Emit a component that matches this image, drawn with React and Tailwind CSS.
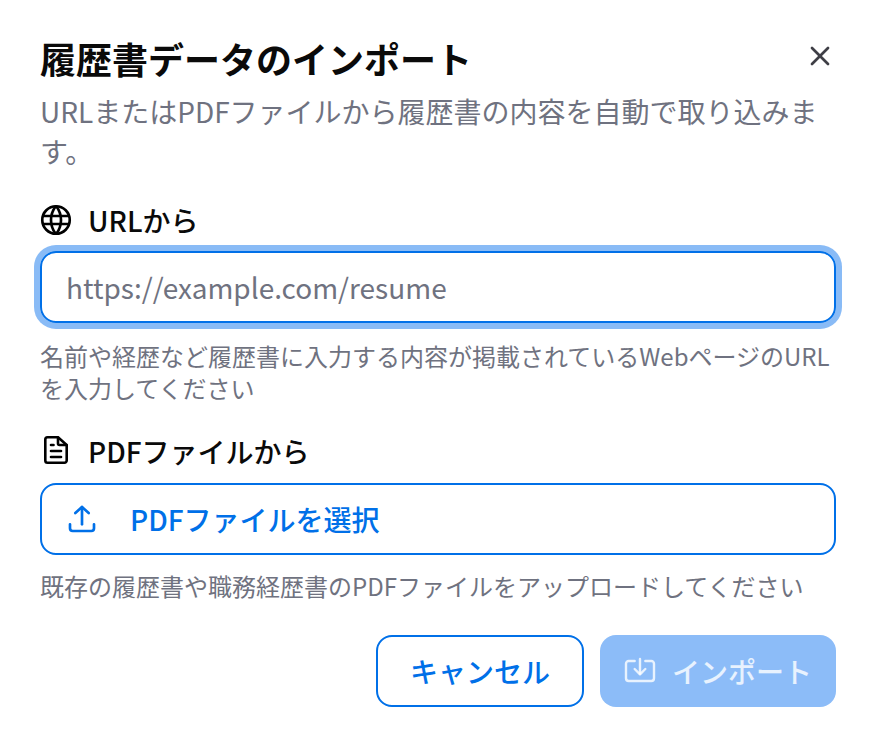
import React from 'react';

const GlobeIcon = () => (
  <svg width="32" height="32" viewBox="0 0 24 24" fill="none" stroke="currentColor" strokeWidth="2" strokeLinecap="round" strokeLinejoin="round">
    <circle cx="12" cy="12" r="10.3" />
    <path d="M2.4 9h19.2" />
    <path d="M2.4 15h19.2" />
    <path d="M11.5 2a17 17 0 0 0 0 20" />
    <path d="M12.5 2a17 17 0 0 1 0 20" />
  </svg>
);

const FileIcon = () => (
  <svg width="32" height="32" viewBox="0 0 32 32" fill="none" stroke="currentColor" strokeWidth="2.6" strokeLinecap="round" strokeLinejoin="round">
    <path d="M18 2.5v6A1.5 1.5 0 0 0 19.5 10h7" />
    <path d="M24.5 27.7h-17a2.2 2.2 0 0 1-2.2-2.2V4.5a2.2 2.2 0 0 1 2.2-2.2H18l8.7 7.7v15.5a2.2 2.2 0 0 1-2.2 2.2z" />
    <path d="M11 10h2.5" />
    <path d="M11 16h10" />
    <path d="M11 22h10" />
  </svg>
);

const UploadIcon = () => (
  <svg width="32" height="32" viewBox="0 0 24 24" fill="none" stroke="currentColor" strokeWidth="2" strokeLinecap="round" strokeLinejoin="round">
    <path d="M3 16v3a2 2 0 0 0 2 2h14a2 2 0 0 0 2-2v-3" />
    <path d="M7 7.5L12 3l5 4.5" />
    <path d="M12 3v13" />
  </svg>
);

const ImportIcon = () => (
  <svg width="32" height="32" viewBox="0 0 24 24" fill="none" stroke="currentColor" strokeWidth="1.8" strokeLinecap="round" strokeLinejoin="round">
    <path d="M8 4.5H3.5a2 2 0 0 0-2 2v11a2 2 0 0 0 2 2h17a2 2 0 0 0 2-2v-11a2 2 0 0 0-2-2H16" />
    <path d="M12 3v11" />
    <path d="M8 10.5l4 4 4-4" />
  </svg>
);

const CloseIcon = () => (
  <svg width="32" height="32" viewBox="0 0 24 24" fill="none" stroke="currentColor" strokeWidth="2" strokeLinecap="round" strokeLinejoin="round">
    <path d="M18 6L6 18" />
    <path d="M6 6l12 12" />
  </svg>
);

export default function App() {
  return (
    <div className="w-[876px] h-[748px] bg-white px-10 pt-[34px] font-['Noto_Sans_CJK_JP',sans-serif]">
      {/* Header */}
      <div className="flex items-center justify-between h-12">
        <h2 className="text-[36px] leading-[48px] font-bold text-[#0a0a0a]">履歴書データのインポート</h2>
        <button className="text-[#3f3f46] -translate-y-[2px]">
          <CloseIcon />
        </button>
      </div>
      <p className="mt-[9px] text-[28px] leading-[40px] text-[#6f7280] w-[796px]">
        URLまたはPDFファイルから履歴書の内容を自動で取り込みます。
      </p>

      {/* URL */}
      <div className="mt-[29px] flex items-center gap-4 h-10 text-[28px] font-medium text-[#0a0a0a]">
        <span className="text-black"><GlobeIcon /></span>
        <span>URLから</span>
      </div>
      <div className="mt-[11px] h-[72px] w-[796px] rounded-2xl border-2 border-[#0070e8] ring-[6px] ring-[#89bbf6] flex items-center px-[24px]">
        <input
          className="w-full outline-none bg-transparent text-[28px] placeholder:text-[#6f7280] font-['Noto_Sans_CJK_JP',sans-serif]"
          placeholder="https://example.com/resume"
        />
      </div>
      <p className="mt-[17px] text-[24px] leading-[32px] text-[#6f7280]">
        名前や経歴など履歴書に入力する内容が掲載されているWebページのURLを入力してください
      </p>

      {/* PDF */}
      <div className="mt-[27px] flex items-center gap-4 h-10 text-[28px] font-medium text-[#0a0a0a]">
        <span className="text-black"><FileIcon /></span>
        <span>PDFファイルから</span>
      </div>
      <button className="mt-[12px] h-[72px] w-[796px] rounded-2xl border-2 border-[#0070e8] text-[#0070e8] flex items-center pl-[24px] gap-[32px] text-[28px] font-medium">
        <UploadIcon />
        <span>PDFファイルを選択</span>
      </button>
      <p className="mt-[15px] text-[24px] leading-[32px] text-[#6f7280]">
        既存の履歴書や職務経歴書のPDFファイルをアップロードしてください
      </p>

      {/* Footer */}
      <div className="mt-[33px] flex justify-end gap-4">
        <button className="h-[72px] w-[208px] rounded-2xl border-2 border-[#0070e8] text-[#0070e8] text-[28px] font-medium">
          キャンセル
        </button>
        <button className="h-[72px] w-[236px] rounded-2xl bg-[#8cbcf8] text-white/80 text-[28px] font-medium flex items-center justify-center gap-4">
          <ImportIcon />
          <span>インポート</span>
        </button>
      </div>
    </div>
  );
}
